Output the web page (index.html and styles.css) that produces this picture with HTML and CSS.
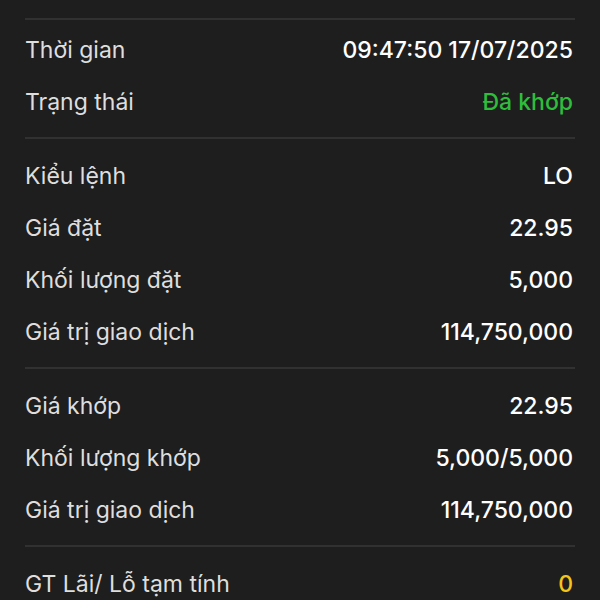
FILE: index.html
```html
<!DOCTYPE html>
<html lang="vi">
<head>
    <meta charset="UTF-8">
    <meta name="viewport" content="width=device-width, initial-scale=1.0">
    <title>Chi tiết lệnh</title>
    <link rel="stylesheet" href="styles.css">
</head>
<body>

    <div class="detail">
        <div class="divider"></div>

        <div class="section section-first">
            <div class="row">
                <span class="label">Thời gian</span>
                <span class="value">09:47:50 17/07/2025</span>
            </div>
            <div class="row">
                <span class="label">Trạng thái</span>
                <span class="value green">Đã khớp</span>
            </div>
        </div>

        <div class="divider"></div>

        <div class="section">
            <div class="row">
                <span class="label">Kiểu lệnh</span>
                <span class="value">LO</span>
            </div>
            <div class="row">
                <span class="label">Giá đặt</span>
                <span class="value">22.95</span>
            </div>
            <div class="row">
                <span class="label">Khối lượng đặt</span>
                <span class="value">5,000</span>
            </div>
            <div class="row">
                <span class="label">Giá trị giao dịch</span>
                <span class="value">114,750,000</span>
            </div>
        </div>

        <div class="divider"></div>

        <div class="section">
            <div class="row">
                <span class="label">Giá khớp</span>
                <span class="value">22.95</span>
            </div>
            <div class="row">
                <span class="label">Khối lượng khớp</span>
                <span class="value">5,000/5,000</span>
            </div>
            <div class="row">
                <span class="label">Giá trị giao dịch</span>
                <span class="value">114,750,000</span>
            </div>
        </div>

        <div class="divider"></div>

        <div class="section">
            <div class="row">
                <span class="label">GT Lãi/ Lỗ tạm tính</span>
                <span class="value yellow">0</span>
            </div>
        </div>
    </div>

</body>
</html>
```

FILE: styles.css
```css
body {
    margin: 0;
    background-color: #1e1e1e;
    font-family: Inter, "Noto Sans", sans-serif;
    font-size: 23px;
}

.detail {
    padding: 18px 25px 0;
}

.divider {
    height: 2px;
    background-color: #313131;
}

.section {
    padding: 11px 0 9px;
}

.section-first {
    padding-top: 4px;
}

.row {
    display: flex;
    justify-content: space-between;
    align-items: center;
    height: 52px;
}

.label {
    color: #dedede;
}

.value {
    color: #ffffff;
    font-weight: 500;
    padding-right: 2px;
}

.green {
    color: #2fbd3c;
}

.yellow {
    color: #f6c31c;
}
```
